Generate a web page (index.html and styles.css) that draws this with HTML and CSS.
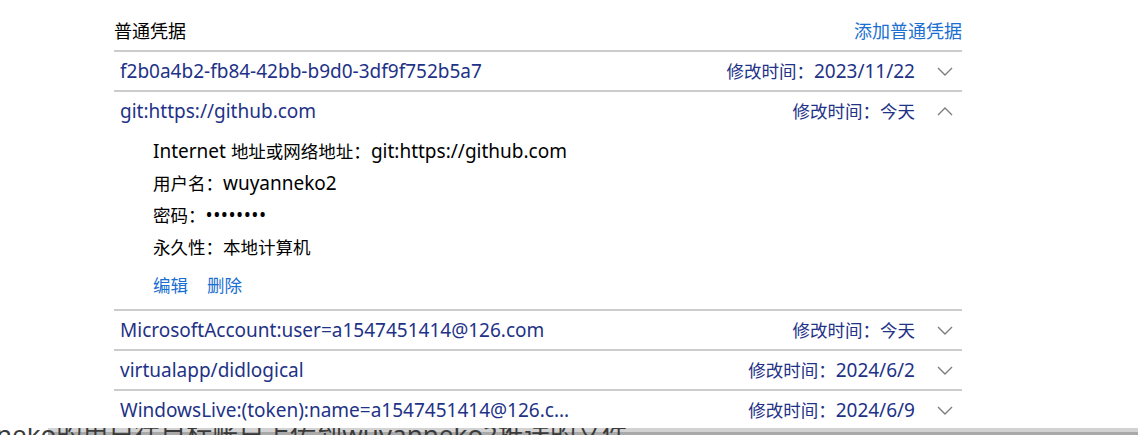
FILE: index.html
```html
<!DOCTYPE html>
<html lang="zh-CN">
<head>
<meta charset="utf-8">
<title>凭据管理器</title>
<link rel="stylesheet" href="styles.css">
</head>
<body>
<div class="panel">
  <div class="panel-head">
    <span class="panel-title">普通凭据</span>
    <a class="link head-link" href="#">添加普通凭据</a>
  </div>

  <div class="cred">
    <div class="cred-row">
      <span class="cred-name">f2b0a4b2-fb84-42bb-b9d0-3df9f752b5a7</span>
      <span class="cred-time"><span class="zh">修改时间：</span>2023/11/22</span>
      <svg class="chev" viewBox="0 0 16 9" width="16" height="9"><path d="M1 1 L8 8 L15 1" /></svg>
    </div>
  </div>

  <div class="cred open">
    <div class="cred-row">
      <span class="cred-name">git:https://github.com</span>
      <span class="cred-time"><span class="zh">修改时间：今天</span></span>
      <svg class="chev" viewBox="0 0 16 9" width="16" height="9"><path d="M1 8 L8 1 L15 8" /></svg>
    </div>
    <div class="cred-detail">
      <div class="detail-line">Internet <span class="zh">地址或网络地址：</span>git:https://github.com</div>
      <div class="detail-line"><span class="zh">用户名：</span>wuyanneko2</div>
      <div class="detail-line"><span class="zh">密码：</span><span class="dots">••••••••</span></div>
      <div class="detail-line"><span class="zh">永久性：本地计算机</span></div>
      <div class="detail-actions">
        <a class="link zh" href="#">编辑</a>
        <a class="link zh" href="#">删除</a>
      </div>
    </div>
  </div>

  <div class="cred">
    <div class="cred-row">
      <span class="cred-name">MicrosoftAccount:user=a1547451414@126.com</span>
      <span class="cred-time"><span class="zh">修改时间：今天</span></span>
      <svg class="chev" viewBox="0 0 16 9" width="16" height="9"><path d="M1 1 L8 8 L15 1" /></svg>
    </div>
  </div>

  <div class="cred">
    <div class="cred-row">
      <span class="cred-name">virtualapp/didlogical</span>
      <span class="cred-time"><span class="zh">修改时间：</span>2024/6/2</span>
      <svg class="chev" viewBox="0 0 16 9" width="16" height="9"><path d="M1 1 L8 8 L15 1" /></svg>
    </div>
  </div>

  <div class="cred last">
    <div class="cred-row">
      <span class="cred-name">WindowsLive:(token):name=a1547451414@126.c...</span>
      <span class="cred-time"><span class="zh">修改时间：</span>2024/6/9</span>
      <svg class="chev" viewBox="0 0 16 9" width="16" height="9"><path d="M1 1 L8 8 L15 1" /></svg>
    </div>
  </div>
</div>

<div class="overlay-strip">
  <div class="strip-band"></div>
  <div class="strip-text">neko的用户往目标账户上传到wuyanneko2推送的文件</div>
</div>
</body>
</html>
```

FILE: styles.css
```css
* { box-sizing: border-box; }

html, body {
  margin: 0;
  padding: 0;
  background: #ffffff;
}

body {
  font-family: "Noto Sans", "Noto Sans CJK SC", sans-serif;
  font-size: 19px;
  color: #000000;
  width: 1138px;
  height: 435px;
  overflow: hidden;
  position: relative;
}

.zh {
  font-size: 17.5px;
}

.link {
  color: #1a6fd1;
  text-decoration: none;
}

.panel {
  margin-left: 114px;
  width: 848px;
}

.panel-head {
  height: 50px;
  padding-top: 12px;
  display: flex;
  justify-content: space-between;
  align-items: flex-start;
  line-height: 38px;
}

.panel-title,
.head-link {
  font-size: 18px;
}

.panel-title {
  color: #000;
}

.cred {
  border-top: 2px solid #cccccc;
}

.cred.last {
  border-bottom: 2px solid #cccccc;
}

.cred-row {
  height: 38px;
  display: flex;
  align-items: center;
  padding-left: 6px;
  padding-right: 9px;
  color: #1e3287;
}

.cred-name {
  flex: 1;
  white-space: nowrap;
}

.cred-time {
  white-space: nowrap;
  margin-right: 22px;
}

.chev {
  display: block;
  flex: none;
}

.chev path {
  fill: none;
  stroke: #7d7d7d;
  stroke-width: 1.4;
}

.cred-detail {
  padding: 5px 0 8px 39px;
}

.detail-line {
  line-height: 32px;
  white-space: nowrap;
}

.dots {
  letter-spacing: 0.5px;
}

.detail-actions {
  margin-top: 6px;
  line-height: 32px;
  display: flex;
  gap: 19px;
}

.overlay-strip {
  position: absolute;
  left: 0;
  top: 428px;
  width: 1138px;
  height: 7px;
  overflow: hidden;
  background: #ffffff;
}

.strip-band {
  position: absolute;
  left: 48px;
  right: 0;
  top: 0;
  bottom: 0;
  background: #d2d2d2;
  border-bottom: 3px solid #a9a9a9;
}

.strip-text {
  position: absolute;
  left: -4px;
  top: 2.5px;
  font-size: 26px;
  line-height: 7px;
  color: #3a3a3a;
  white-space: nowrap;
}
```
